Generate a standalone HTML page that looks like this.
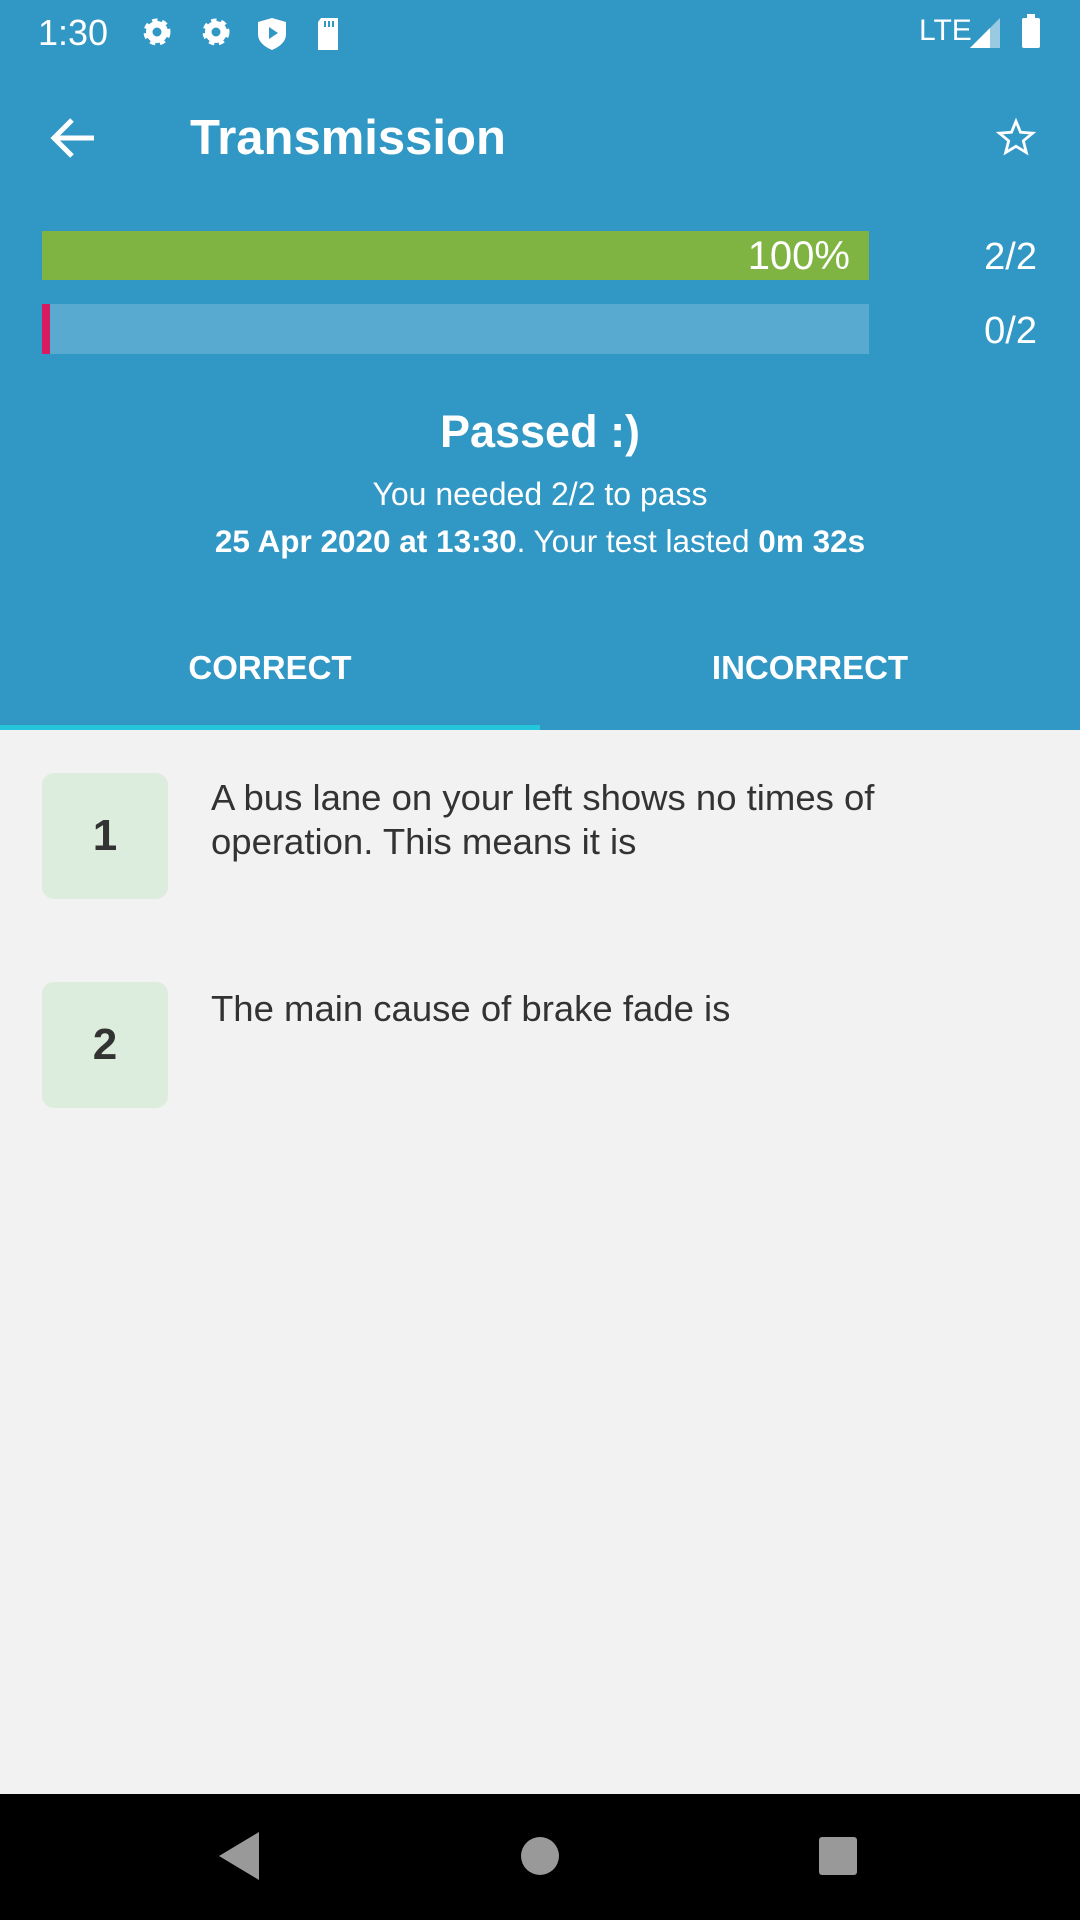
<!DOCTYPE html>
<html><head><meta charset="utf-8"><style>
*{margin:0;padding:0;box-sizing:border-box}
body{width:1080px;height:1920px;background:#f2f2f2;font-family:"Liberation Sans",sans-serif;position:relative;overflow:hidden}
.hdr{position:absolute;left:0;top:0;width:1080px;height:730px;background:#3197c4;color:#fff}
.a{position:absolute;white-space:nowrap}
.nav{position:absolute;left:0;top:1794px;width:1080px;height:126px;background:#000}
.box{position:absolute;left:42px;width:126px;height:126px;background:#ddeddd;border-radius:12px;font-weight:bold;font-size:44px;color:#333;display:flex;align-items:center;justify-content:center}
.q{position:absolute;left:211px;font-size:36.5px;color:#333;line-height:44px}
</style></head><body>
<div class="hdr">
 <div class="a" style="left:38px;top:12px;font-size:36px">1:30</div>
 <svg class="a" style="left:138px;top:14px" width="210" height="40" viewBox="0 0 210 40">
  <g fill="#fff" stroke="#fff" stroke-width="5" stroke-dasharray="5 4.4"><circle cx="19" cy="18" r="11"/><circle cx="78" cy="18" r="11"/></g>
  <g fill="#fff"><circle cx="19" cy="18" r="10"/><circle cx="78" cy="18" r="10"/></g>
  <g fill="#3197c4"><circle cx="19" cy="18" r="4.5"/><circle cx="78" cy="18" r="4.5"/></g>
  <path d="M134 4 L148 8 V20 Q148 30 134 36 Q120 30 120 20 V8 Z" fill="#fff"/><path d="M131 13 L140 19 L131 25Z" fill="#3197c4"/>
  <path d="M183 4 H200 V36 H180 V8 Z" fill="#fff"/><path d="M187 7V13M191 7V13M195 7V13" stroke="#3197c4" stroke-width="2"/>
 </svg>
 <div class="a" style="left:919px;top:14px;font-size:30px">LTE</div>
 <svg class="a" style="left:970px;top:14px" width="80" height="36"><path d="M0 34 L30 4 V34Z" fill="#fff" opacity=".5"/><path d="M0 34 L20 14 V34Z" fill="#fff"/><rect x="52" y="4" width="18" height="30" rx="2" fill="#fff"/><rect x="57" y="0" width="8" height="5" fill="#fff"/></svg>
 <svg class="a" style="left:50px;top:115px" width="46" height="46" viewBox="0 0 46 46"><path d="M44 23 H5 M22 5 L4 23 L22 41" stroke="#fff" stroke-width="5" fill="none"/></svg>
 <div class="a" style="left:190px;top:110px;font-size:49px;font-weight:bold">Transmission</div>
 <svg class="a" style="left:995px;top:116px" width="42" height="42" viewBox="0 0 24 24"><path d="M12 3 L14.6 9.3 L21.5 9.8 L16.2 14.2 L17.9 20.9 L12 17.3 L6.1 20.9 L7.8 14.2 L2.5 9.8 L9.4 9.3Z" fill="none" stroke="#fff" stroke-width="1.6"/></svg>
 <div class="a" style="left:42px;top:231px;width:827px;height:49px;background:#7fb342"></div>
 <div class="a" style="left:700px;top:234px;width:150px;text-align:right;font-size:40px">100%</div>
 <div class="a" style="left:940px;top:236px;width:97px;text-align:right;font-size:38px">2/2</div>
 <div class="a" style="left:42px;top:304px;width:827px;height:50px;background:#58aad0"></div>
 <div class="a" style="left:42px;top:304px;width:8px;height:50px;background:#d81b60"></div>
 <div class="a" style="left:940px;top:310px;width:97px;text-align:right;font-size:38px">0/2</div>
 <div class="a" style="left:0;top:406px;width:1080px;text-align:center;font-size:45px;font-weight:bold">Passed :)</div>
 <div class="a" style="left:0;top:476px;width:1080px;text-align:center;font-size:32px">You needed 2/2 to pass</div>
 <div class="a" style="left:0;top:523px;width:1080px;text-align:center;font-size:31.5px"><b>25 Apr 2020 at 13:30</b>. Your test lasted <b>0m 32s</b></div>
 <div class="a" style="left:0;top:649px;width:540px;text-align:center;font-size:33px;font-weight:bold">CORRECT</div>
 <div class="a" style="left:540px;top:649px;width:540px;text-align:center;font-size:33px;font-weight:bold">INCORRECT</div>
 <div class="a" style="left:0;top:725px;width:540px;height:5px;background:#26c6da"></div>
</div>
<div class="box" style="top:773px">1</div>
<div class="q" style="top:776px">A bus lane on your left shows no times of<br>operation. This means it is</div>
<div class="box" style="top:982px">2</div>
<div class="q" style="top:987px">The main cause of brake fade is</div>
<div class="nav">
 <svg class="a" style="left:215px;top:38px" width="44" height="48"><path d="M44 0 V48 L4 24Z" fill="#999"/></svg>
 <div class="a" style="left:521px;top:43px;width:38px;height:38px;border-radius:50%;background:#999"></div>
 <div class="a" style="left:819px;top:43px;width:38px;height:38px;border-radius:3px;background:#999"></div>
</div>
</body></html>
